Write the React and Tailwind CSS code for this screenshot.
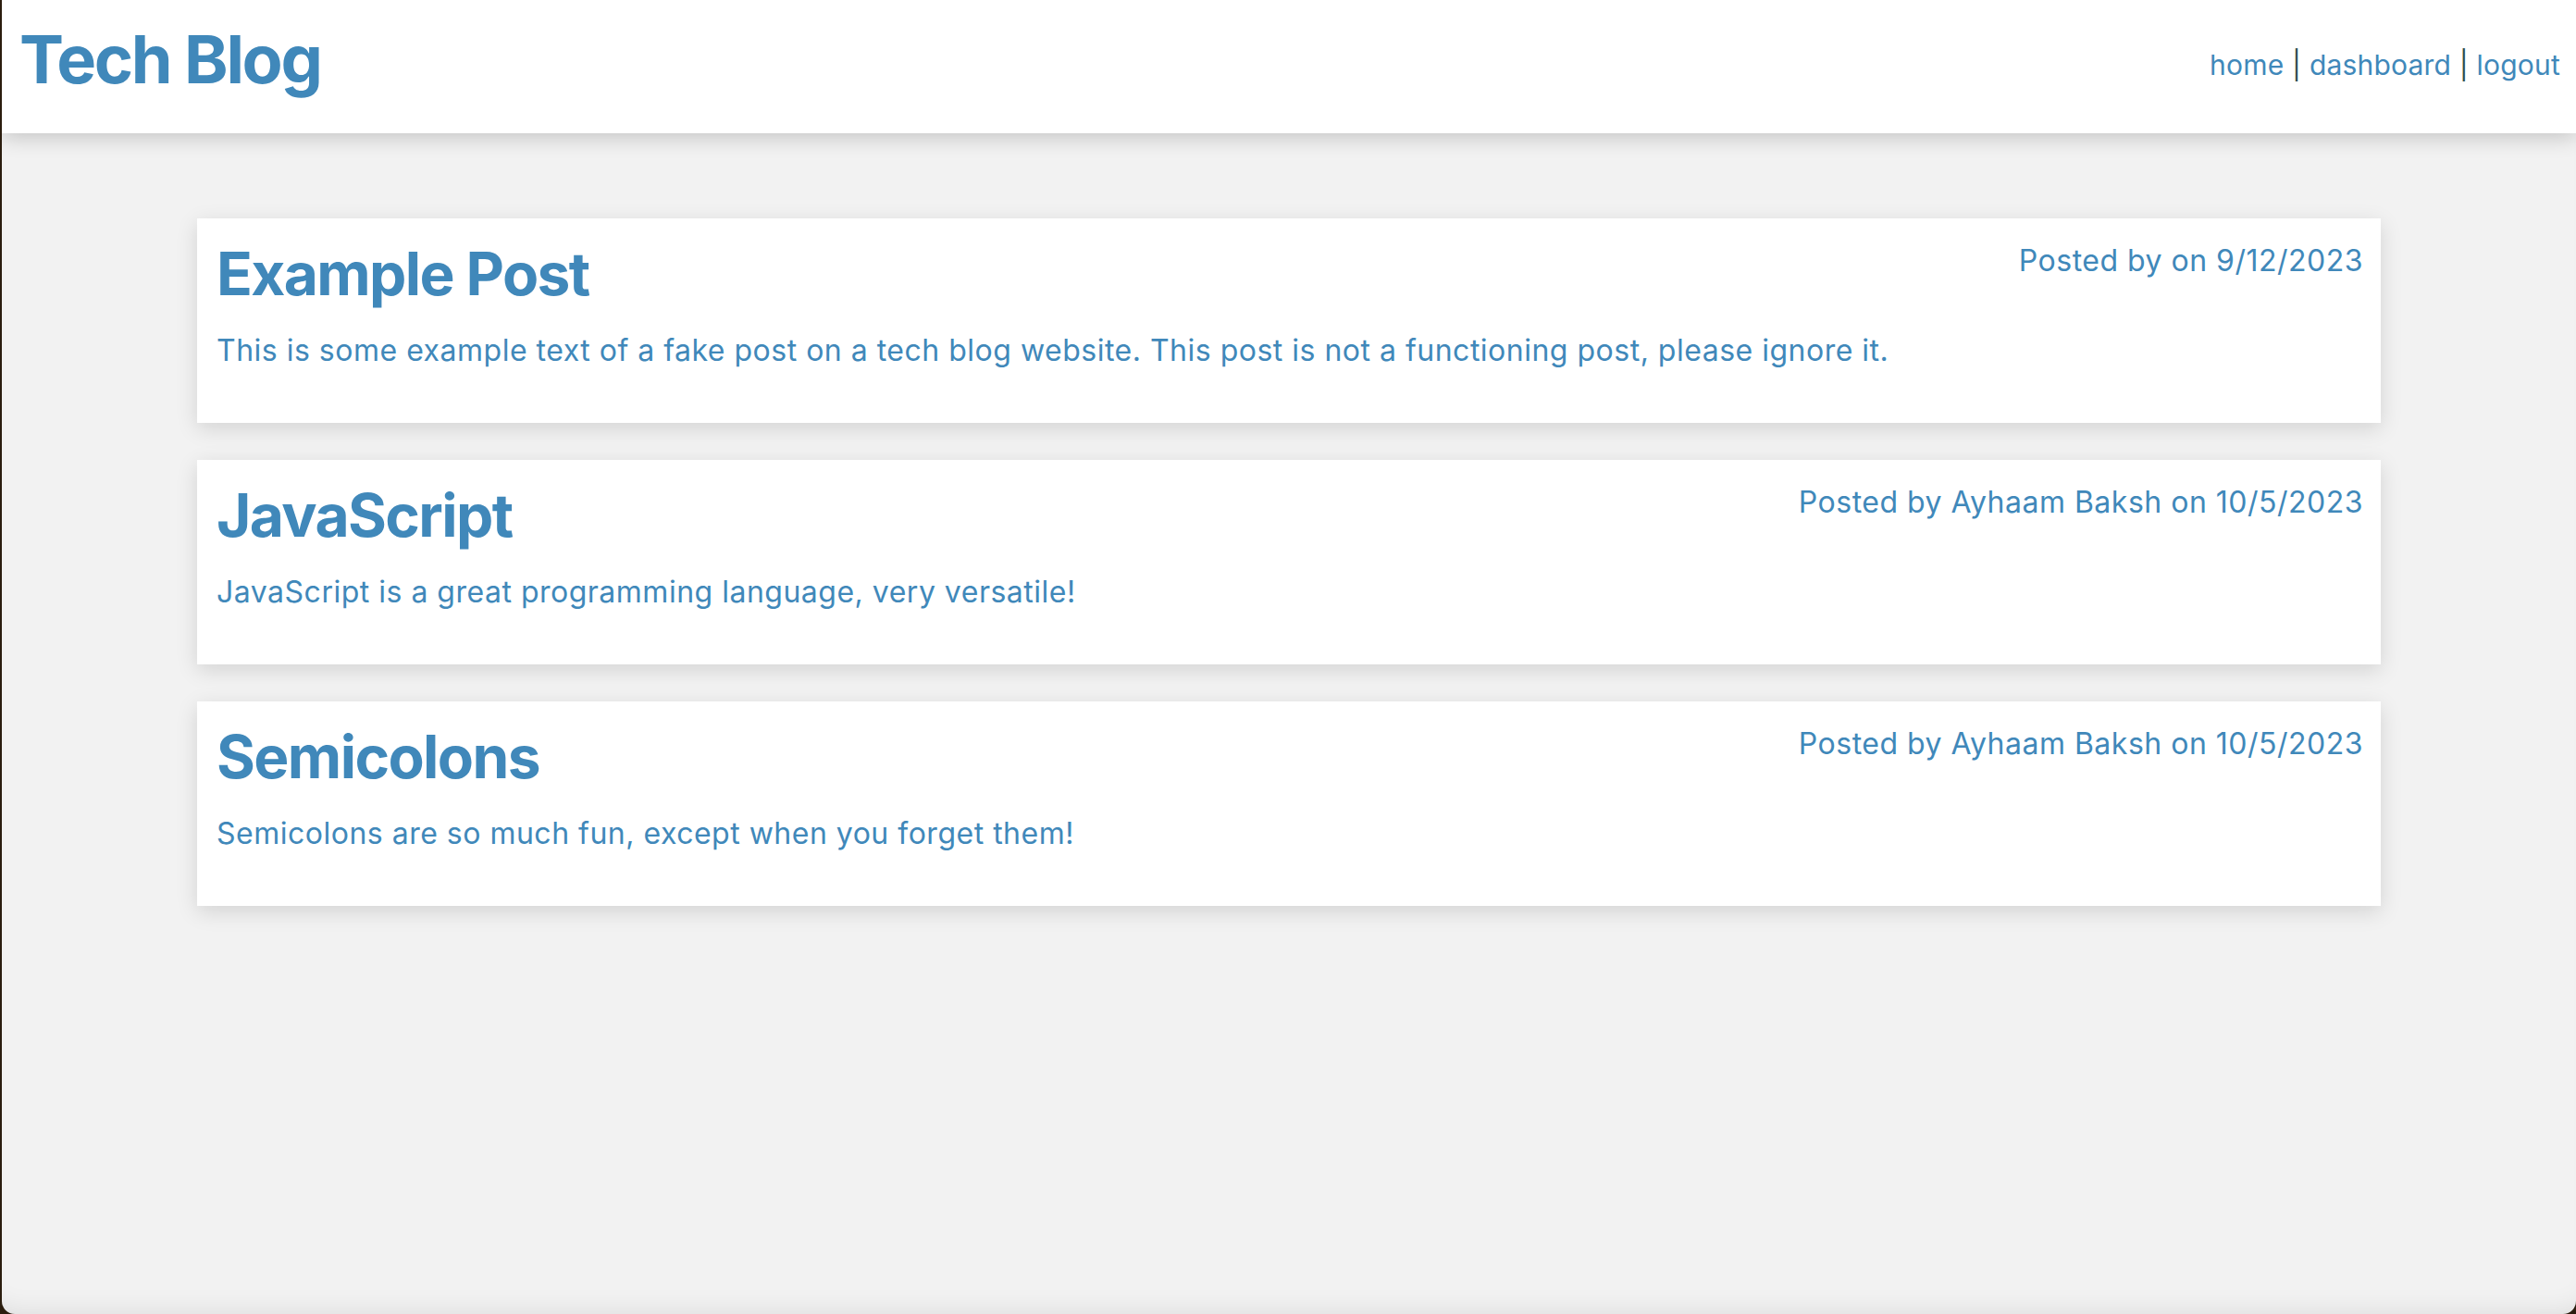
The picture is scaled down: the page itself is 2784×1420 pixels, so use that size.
const posts = [
  {
    id: 1,
    title: "Example Post",
    author: "",
    date: "9/12/2023",
    body: "This is some example text of a fake post on a tech blog website. This post is not a functioning post, please ignore it.",
  },
  {
    id: 2,
    title: "JavaScript",
    author: "Ayhaam Baksh",
    date: "10/5/2023",
    body: "JavaScript is a great programming language, very versatile!",
  },
  {
    id: 3,
    title: "Semicolons",
    author: "Ayhaam Baksh",
    date: "10/5/2023",
    body: "Semicolons are so much fun, except when you forget them!",
  },
];

const PostCard = ({ post }) => {
  return (
    <div className="bg-white pt-[22px] pb-[54px] pl-[21px] pr-[19px] shadow-[0_6px_22px_rgba(0,0,0,0.13)]">
      <div className="flex justify-between items-start">
        <h2 className="mt-[6px] text-[64px] leading-none font-bold tracking-[-1.6px]">{post.title}</h2>
        <p className="text-[32px] leading-normal tracking-[0.5px]">
          Posted by {post.author ? post.author + " " : ""}on {post.date}
        </p>
      </div>
      <p className="mt-[27px] text-[32px] leading-normal tracking-[0.5px]">{post.body}</p>
    </div>
  );
};

export default function App() {
  return (
    <div className="min-h-screen bg-[#2b1d0e] font-['Inter','Liberation_Sans',sans-serif] text-[#4088ba]">
      <div className="ml-[2px] min-h-[1420px] bg-[#f2f2f2] rounded-b-[14px] overflow-hidden shadow-[inset_0_-24px_30px_-24px_rgba(0,0,0,0.1)]">
        {/* header */}
        <header className="relative z-10 h-[144px] bg-white flex justify-between items-start pl-[19px] pr-[17px] shadow-[0_4px_22px_rgba(0,0,0,0.2)]">
          <h1 className="mt-[28px] text-[72px] leading-none font-bold tracking-[-2.3px]">Tech Blog</h1>
          <nav className="mt-[48px] text-[30px] leading-normal tracking-[0.2px] whitespace-pre">
            <a href="#">home</a>
            <span className="text-[#2f4f4f]"> | </span>
            <a href="#">dashboard</a>
            <span className="text-[#2f4f4f]"> | </span>
            <a href="#">logout</a>
          </nav>
        </header>

        <main className="pt-[92px] px-[211px] flex flex-col gap-[40px]">
          {posts.map((post) => (
            <PostCard key={post.id} post={post} />
          ))}
        </main>
      </div>
    </div>
  );
}
